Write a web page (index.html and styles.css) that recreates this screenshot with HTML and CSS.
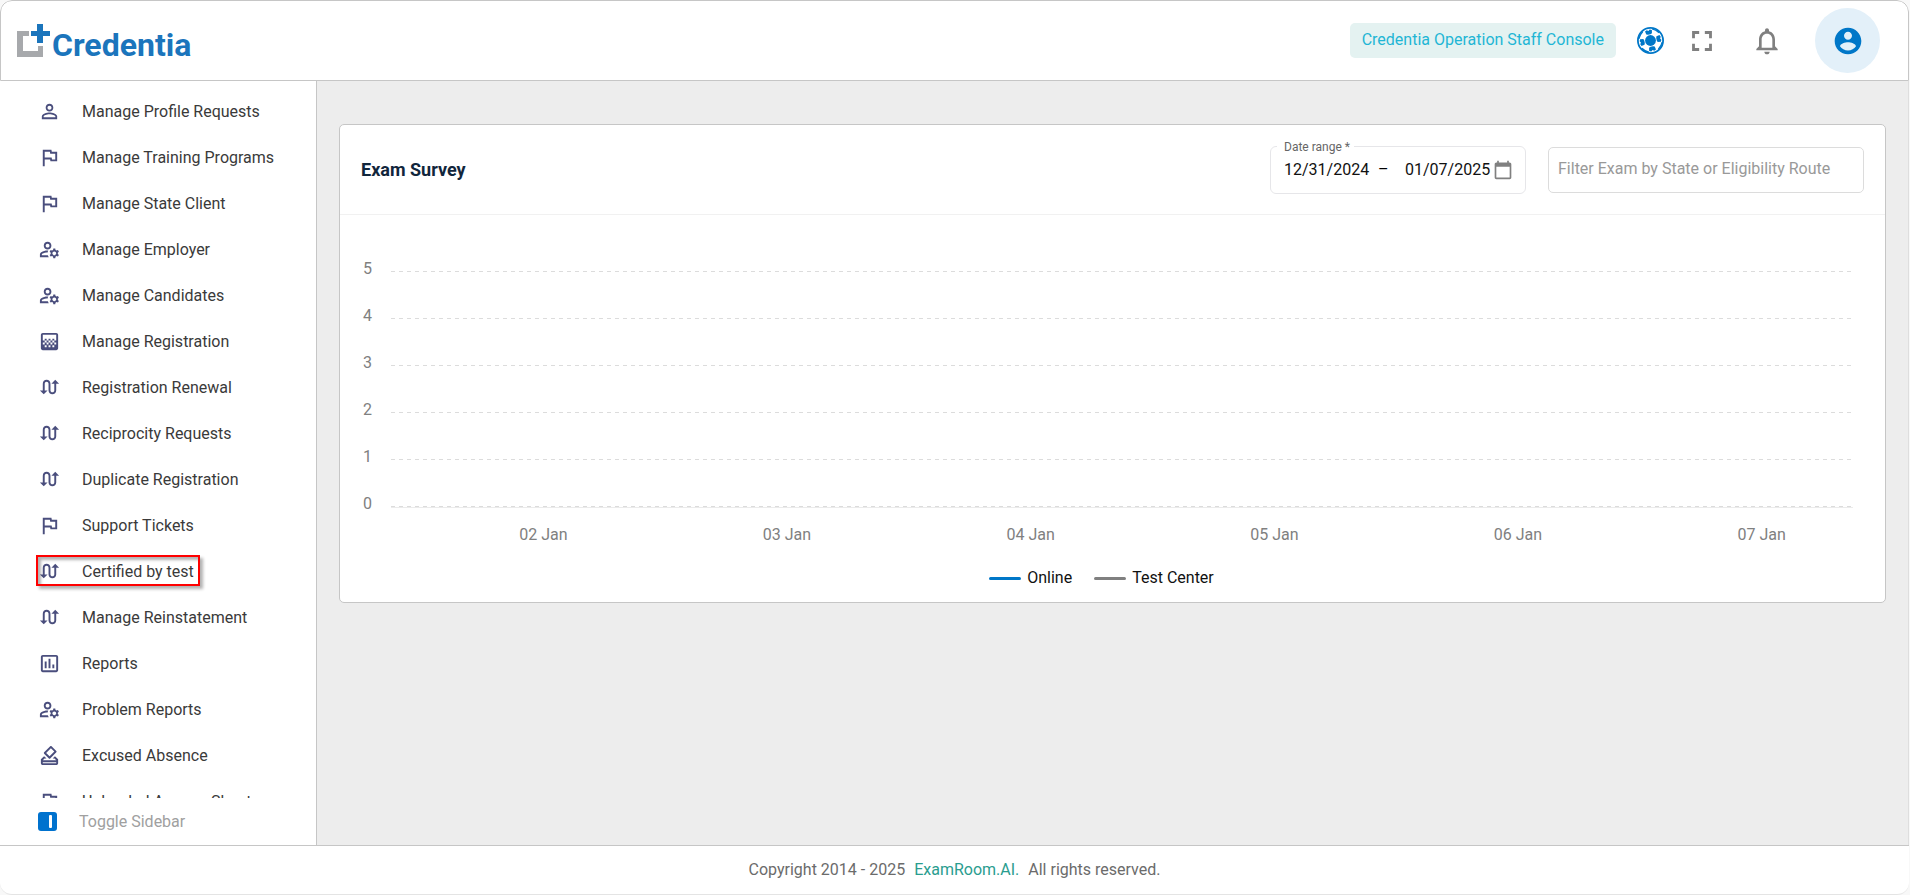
FILE: index.html
```html
<!DOCTYPE html>
<html lang="en">

<head>
  <meta charset="UTF-8">
  <meta name="viewport" content="width=device-width, initial-scale=1.0">
  <title>Credentia</title>
  <link rel="stylesheet" href="styles.css">
</head>

<body>
  <!-- icon sprite -->
  <svg class="sprite" aria-hidden="true">
    <symbol id="person" viewBox="0 0 24 24">
      <path d="M12 5.9c1.16 0 2.1.94 2.1 2.1s-.94 2.1-2.1 2.1S9.9 9.16 9.9 8s.94-2.1 2.1-2.1m0 9c2.97 0 6.1 1.46 6.1 2.1v1.1H5.9V17c0-.64 3.13-2.1 6.1-2.1M12 4C9.79 4 8 5.79 8 8s1.79 4 4 4 4-1.79 4-4-1.79-4-4-4zm0 9c-2.67 0-8 1.34-8 4v3h16v-3c0-2.66-5.33-4-8-4z"/>
    </symbol>
    <symbol id="flag" viewBox="0 0 24 24">
      <path d="M12.36 6l.4 2H18v6h-3.36l-.4-2H7V6h5.36M14 4H5v17h2v-7h5.6l.4 2h7V6h-5.6L14 4z"/>
    </symbol>
    <symbol id="accounts" viewBox="0 0 24 24">
      <path d="M4 18v-.65c0-.34.16-.66.41-.81C6.1 15.53 8.03 15 10 15c.03 0 .05 0 .08.01.1-.7.3-1.37.59-1.98-.22-.02-.44-.03-.67-.03-2.42 0-4.68.67-6.61 1.82-.88.52-1.39 1.5-1.39 2.53V20h9.26c-.42-.6-.75-1.28-.97-2H4zM10 12c2.21 0 4-1.79 4-4s-1.79-4-4-4-4 1.79-4 4 1.79 4 4 4zm0-6c1.1 0 2 .9 2 2s-.9 2-2 2-2-.9-2-2 .9-2 2-2zM20.75 16c0-.22-.03-.42-.06-.63l1.14-1.01-1-1.73-1.45.49c-.32-.27-.68-.48-1.08-.63L18 11h-2l-.3 1.49c-.4.15-.76.36-1.08.63l-1.45-.49-1 1.73 1.14 1.01c-.03.21-.06.41-.06.63s.03.42.06.63l-1.14 1.01 1 1.73 1.45-.49c.32.27.68.48 1.08.63L16 21h2l.3-1.49c.4-.15.76-.36 1.08-.63l1.45.49 1-1.73-1.14-1.01c.03-.21.06-.41.06-.63zM17 18c-1.1 0-2-.9-2-2s.9-2 2-2 2 .9 2 2-.9 2-2 2z"/>
    </symbol>
    <symbol id="gradient" viewBox="0 0 24 24">
      <path d="M11 9h2v2h-2zm-2 2h2v2H9zm4 0h2v2h-2zm2-2h2v2h-2zM7 9h2v2H7zm12-6H5c-1.1 0-2 .9-2 2v14c0 1.1.9 2 2 2h14c1.1 0 2-.9 2-2V5c0-1.1-.9-2-2-2zM9 18H7v-2h2v2zm4 0h-2v-2h2v2zm4 0h-2v-2h2v2zm2-7h-2v2h2v2h-2v-2h-2v2h-2v-2h-2v2H9v-2H7v2H5v-2h2v-2H5V5h14v6z"/>
    </symbol>
    <symbol id="swap" viewBox="0 0 24 24">
      <path d="M18 4l-4 4h3v7c0 1.1-.9 2-2 2s-2-.9-2-2V8c0-2.21-1.79-4-4-4S5 5.79 5 8v7H2l4 4 4-4H7V8c0-1.1.9-2 2-2s2 .9 2 2v7c0 2.21 1.79 4 4 4s4-1.79 4-4V8h3l-4-4z"/>
    </symbol>
    <symbol id="chart" viewBox="0 0 24 24">
      <path d="M19 3H5c-1.1 0-2 .9-2 2v14c0 1.1.9 2 2 2h14c1.1 0 2-.9 2-2V5c0-1.1-.9-2-2-2zm0 16H5V5h14v14zM7 10h2v7H7zm4-3h2v10h-2zm4 6h2v4h-2z"/>
    </symbol>
    <symbol id="vote" viewBox="0 0 24 24">
      <path d="M18 13h-.68l-2 2h1.91L19 17H5l1.78-2h2.05l-2-2H6l-3 3v4c0 1.1.89 2 1.99 2H19c1.1 0 2-.89 2-2v-4l-3-3zm1 7H5v-1h14v1zm-7.66-4.98c.39.39 1.02.39 1.41 0l6.36-6.36c.39-.39.39-1.02 0-1.41L14.16 2.3c-.38-.4-1.01-.4-1.4-.01L6.39 8.66c-.39.39-.39 1.02 0 1.41l4.95 4.95zm2.12-10.61L17 7.95l-4.95 4.95-3.54-3.54 4.95-4.95z"/>
    </symbol>
  </svg>

  <div class="app">
    <header class="header">
      <a class="logo" href="#">
        <svg class="logo-mark" viewBox="0 0 34 34" aria-hidden="true">
          <path fill="#a7a9ac" d="M0 7h12v5H6v15h15v-5h5v11H0z"/>
          <path fill="#1b75bc" d="M20 0h6v7h7v5h-7v7h-6v-7h-6V7h6z"/>
        </svg>
        <span>Credentia</span>
      </a>
      <div class="header-right">
        <span class="console">Credentia Operation Staff Console</span>
        <button class="icon-btn ball" aria-label="Support">
          <svg width="27" height="27" viewBox="0 0 27 27">
            <circle cx="13.5" cy="13.5" r="12.6" fill="#fff" stroke="#0077c8" stroke-width="1.8"/>
            <circle cx="13.5" cy="13.5" r="5.4" fill="#0077c8"/>
            <g fill="#0077c8" transform="rotate(-12 13.5 13.5)">
              <path id="patch" d="M10.6 6.8L10 3.6l2-.9 1.5 1 1.5-1 2 .9-.6 3.2-1.6.6h-2.6zM17.6 1.8q4.2 1.6 6.4 5.6l-1 .6q-2.4-3.6-5.8-5z"/>
              <use href="#patch" transform="rotate(90 13.5 13.5)"/>
              <use href="#patch" transform="rotate(180 13.5 13.5)"/>
              <use href="#patch" transform="rotate(270 13.5 13.5)"/>
            </g>
          </svg>
        </button>
        <button class="icon-btn fullscreen" aria-label="Fullscreen">
          <svg width="34" height="34" viewBox="0 0 24 24">
            <path d="M7 14H5v5h5v-2H7v-3zm-2-4h2V7h3V5H5v5zm12 7h-3v2h5v-5h-2v3zM14 5v2h3v3h2V5h-5z"/>
          </svg>
        </button>
        <button class="icon-btn bell" aria-label="Notifications">
          <svg width="32" height="32" viewBox="0 0 24 24">
            <path d="M12 22c1.1 0 2-.9 2-2h-4c0 1.1.9 2 2 2zm6-6v-5c0-3.07-1.63-5.64-4.5-6.32V4c0-.83-.67-1.5-1.5-1.5s-1.5.67-1.5 1.5v.68C7.64 5.36 6 7.92 6 11v5l-2 2v1h16v-1l-2-2zm-2 1H8v-6c0-2.48 1.51-4.5 4-4.5s4 2.02 4 4.5v6z"/>
          </svg>
        </button>
        <button class="icon-btn avatar" aria-label="Account">
          <svg width="32" height="32" viewBox="0 0 24 24">
            <path d="M12 2C6.48 2 2 6.48 2 12s4.48 10 10 10 10-4.48 10-10S17.52 2 12 2zm0 3c1.66 0 3 1.34 3 3s-1.34 3-3 3-3-1.34-3-3 1.34-3 3-3zm0 14.2c-2.5 0-4.71-1.28-6-3.22.03-1.99 4-3.08 6-3.08 1.99 0 5.97 1.09 6 3.08-1.29 1.94-3.5 3.22-6 3.22z"/>
          </svg>
        </button>
      </div>
    </header>

    <div class="body">
      <aside class="sidebar">
        <nav class="nav">
          <a href="#"><svg><use href="#person"/></svg>Manage Profile Requests</a>
          <a href="#"><svg><use href="#flag"/></svg>Manage Training Programs</a>
          <a href="#"><svg><use href="#flag"/></svg>Manage State Client</a>
          <a href="#"><svg><use href="#accounts"/></svg>Manage Employer</a>
          <a href="#"><svg><use href="#accounts"/></svg>Manage Candidates</a>
          <a href="#"><svg><use href="#gradient"/></svg>Manage Registration</a>
          <a href="#"><svg><use href="#swap"/></svg>Registration Renewal</a>
          <a href="#"><svg><use href="#swap"/></svg>Reciprocity Requests</a>
          <a href="#"><svg><use href="#swap"/></svg>Duplicate Registration</a>
          <a href="#"><svg><use href="#flag"/></svg>Support Tickets</a>
          <a href="#" class="marked"><svg><use href="#swap"/></svg>Certified by test</a>
          <a href="#"><svg><use href="#swap"/></svg>Manage Reinstatement</a>
          <a href="#"><svg><use href="#chart"/></svg>Reports</a>
          <a href="#"><svg><use href="#accounts"/></svg>Problem Reports</a>
          <a href="#"><svg><use href="#vote"/></svg>Excused Absence</a>
          <a href="#"><svg><use href="#flag"/></svg>Uploaded Answer Sheet</a>
        </nav>
        <button class="toggle">
          <svg width="19" height="19" viewBox="0 0 19 19">
            <rect width="19" height="19" rx="3" fill="#0072ce"/>
            <rect x="11" y="3" width="3" height="13" rx="1" fill="#fff"/>
          </svg>
          Toggle Sidebar
        </button>
      </aside>

      <main class="main">
        <section class="card">
          <div class="card-header">
            <h2>Exam Survey</h2>
            <fieldset class="date-range">
              <legend>Date range *</legend>
              <input type="text" value="12/31/2024" aria-label="Start date">
              <span class="dash">–</span>
              <input type="text" value="01/07/2025" aria-label="End date">
              <button class="icon-btn calendar" aria-label="Open calendar">
                <svg width="20" height="20" viewBox="0 0 24 24">
                  <path d="M20 3h-1V1h-2v2H7V1H5v2H4c-1.1 0-2 .9-2 2v16c0 1.1.9 2 2 2h16c1.1 0 2-.9 2-2V5c0-1.1-.9-2-2-2zm0 18H4V8h16v13z"/>
                </svg>
              </button>
            </fieldset>
            <input class="filter" type="text" placeholder="Filter Exam by State or Eligibility Route" aria-label="Filter exam">
          </div>

          <div class="chart">
            <div class="y-axis">
              <span>5</span>
              <span>4</span>
              <span>3</span>
              <span>2</span>
              <span>1</span>
              <span>0</span>
            </div>
            <svg class="plot" role="img" aria-label="Exam survey chart">
              <g class="grid">
                <line x1="0" x2="100%" y1="26.5" y2="26.5"/>
                <line x1="0" x2="100%" y1="73.5" y2="73.5"/>
                <line x1="0" x2="100%" y1="120.5" y2="120.5"/>
                <line x1="0" x2="100%" y1="167.5" y2="167.5"/>
                <line x1="0" x2="100%" y1="214.5" y2="214.5"/>
                <line x1="0" x2="100%" y1="261.5" y2="261.5"/>
              </g>
              <line class="axis" x1="0" x2="100%" y1="262.5" y2="262.5"/>
              <g class="x-labels">
                <text x="10.42%" y="295">02 Jan</text>
                <text x="27.08%" y="295">03 Jan</text>
                <text x="43.75%" y="295">04 Jan</text>
                <text x="60.42%" y="295">05 Jan</text>
                <text x="77.08%" y="295">06 Jan</text>
                <text x="93.75%" y="295">07 Jan</text>
              </g>
            </svg>
          </div>
          <div class="legend">
            <span class="online">Online</span>
            <span class="center">Test Center</span>
          </div>
        </section>
      </main>
    </div>

    <footer class="footer">
      <span>Copyright 2014 - 2025</span>
      <a href="#">ExamRoom.AI.</a>
      <span>All rights reserved.</span>
    </footer>
  </div>
</body>

</html>
```
FILE: styles.css
```css
*, *::before, *::after {
  box-sizing: border-box;
}

body {
  margin: 0;
  background: #f8f8f8;
  font-family: Roboto, "Liberation Sans", sans-serif;
  font-size: 16px;
}

button, input {
  font: inherit;
}

a {
  text-decoration: none;
}

.sprite {
  position: absolute;
  width: 0;
  height: 0;
}

.app {
  display: flex;
  flex-direction: column;
  height: 100vh;
  margin-right: 1px;
  background: #fff;
  border-bottom: 1px solid #e4e4e4;
  border-radius: 12px;
  overflow: hidden;
}

/* header */
.header {
  display: flex;
  justify-content: space-between;
  align-items: center;
  height: 81px;
  flex-shrink: 0;
  padding: 0 28px 0 16px;
  border: 1px solid #c6c6c6;
  border-radius: 12px 12px 0 0;
}

.logo {
  display: flex;
  align-items: center;
  gap: 1px;
  color: #1b75bc;
  font-size: 32px;
  font-weight: bold;
  line-height: 34px;
}

.logo-mark {
  width: 34px;
  height: 34px;
}

.logo span {
  padding-top: 8px;
}

.header-right {
  display: flex;
  align-items: center;
}

.console {
  padding: 7px 12px 9px;
  background: #e4f2f1;
  border-radius: 5px;
  color: #1fb6d5;
  line-height: 19px;
}

.icon-btn {
  display: flex;
  align-items: center;
  justify-content: center;
  padding: 0;
  border: 0;
  background: none;
  fill: #808080;
  cursor: pointer;
}

.ball {
  margin-left: 21px;
}

.fullscreen {
  margin-left: 21px;
}

.bell {
  margin-left: 32px;
}

.avatar {
  width: 65px;
  height: 65px;
  margin-left: 32px;
  border-radius: 50%;
  background: #e3f0f9;
  fill: #0077c8;
}

.body {
  display: flex;
  flex: 1;
  min-height: 0;
}

/* sidebar */
.sidebar {
  display: flex;
  flex-direction: column;
  width: 317px;
  flex-shrink: 0;
  border-right: 1px solid #c6c6c6;
}

.nav {
  flex: 1;
  min-height: 0;
  padding-top: 7px;
  overflow: hidden;
}

.nav a {
  position: relative;
  display: flex;
  align-items: center;
  gap: 21px;
  height: 46px;
  padding-left: 38px;
  color: #3a3a3a;
}

.nav svg {
  width: 23px;
  height: 23px;
  fill: #4a4e7d;
}

.nav .marked::after {
  content: "";
  position: absolute;
  left: 36px;
  top: 7px;
  width: 164px;
  height: 31px;
  border: 2px solid #f00;
  box-shadow: 3px 3px 3px rgba(0, 0, 0, 0.3), inset 3px 3px 3px rgba(0, 0, 0, 0.3);
}

.toggle {
  display: flex;
  align-items: center;
  gap: 22px;
  height: 47px;
  padding: 0 0 0 38px;
  border: 0;
  background: none;
  color: #a0a0a0;
  cursor: pointer;
}

/* content */
.main {
  flex: 1;
  min-width: 0;
  padding: 43px 22px 0;
  background: #ededed;
  border-right: 1px solid #dedede;
}

.card {
  background: #fff;
  border: 1px solid #c6c6c6;
  border-radius: 5px;
}

.card-header {
  display: flex;
  align-items: center;
  height: 90px;
  padding: 0 21px;
  border-bottom: 1px solid #f1f1f1;
}

.card-header h2 {
  margin: 0 auto 0 0;
  color: #11263c;
  font-size: 18px;
  font-weight: bold;
}

.date-range {
  display: flex;
  align-items: center;
  height: 54px;
  margin: 0 22px 6px 0;
  padding: 0 12px 7px 13px;
  border: 1px solid #e6e6e9;
  border-radius: 6px;
}

.date-range legend {
  margin-left: -7px;
  padding: 0 4px 0 7px;
  color: #666;
  font-size: 12px;
  line-height: 14px;
}

.date-range input {
  width: 88px;
  padding: 0;
  border: 0;
  outline: 0;
  background: none;
  color: #111;
}

.dash {
  width: 33px;
  padding-left: 6px;
}

.filter {
  width: 316px;
  height: 46px;
  padding: 0 9px 2px;
  border: 1px solid #dcdcdc;
  border-radius: 5px;
}

.filter::placeholder {
  color: #999;
}

/* chart */
.chart {
  display: flex;
  padding: 30px 32px 0 23px;
}

.y-axis {
  display: flex;
  flex-direction: column;
  width: 28px;
  color: #808080;
  line-height: 47px;
}

.plot {
  flex: 1;
  min-width: 0;
  height: 310px;
}

.grid line {
  stroke: #dcdcdc;
  stroke-dasharray: 4;
}

.axis {
  stroke: #ebebeb;
}

.x-labels {
  fill: #808080;
  text-anchor: middle;
}

.legend {
  display: flex;
  justify-content: center;
  gap: 22px;
  padding: 13px 22px 14px 0;
  color: #111;
  line-height: 20px;
}

.legend span {
  display: flex;
  align-items: center;
  gap: 6px;
}

.legend span::before {
  content: "";
  width: 32px;
  height: 3px;
  border-radius: 2px;
  background: #0077c8;
}

.legend .center::before {
  background: #808080;
}

/* footer */
.footer {
  display: flex;
  align-items: center;
  justify-content: center;
  gap: 9px;
  height: 49px;
  padding-bottom: 2px;
  flex-shrink: 0;
  border-top: 1px solid #c6c6c6;
  color: #6b6b6b;
}

.footer a {
  color: #2a9d8f;
}
```
